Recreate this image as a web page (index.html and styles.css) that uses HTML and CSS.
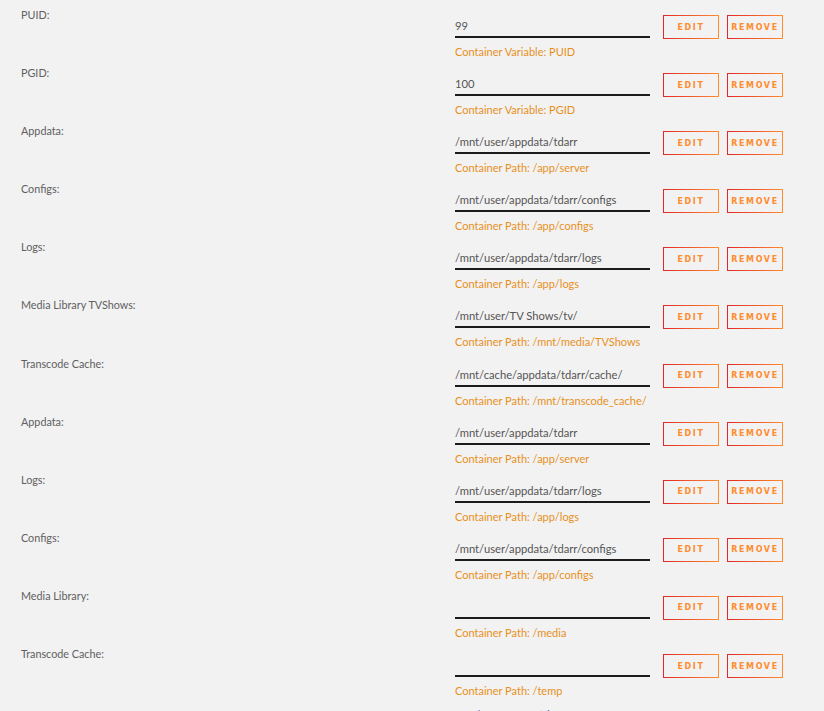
FILE: index.html
```html
<!DOCTYPE html>
<html lang="en">
<head>
    <meta charset="UTF-8">
    <meta name="viewport" content="width=device-width, initial-scale=1.0">
    <title>Container Settings</title>
    <link rel="stylesheet" href="styles.css">
</head>
<body>
    <div class="settings">
        <div class="row">
            <div class="label">PUID:</div>
            <div class="field">
                <div class="value">99</div>
                <div class="hint">Container Variable: PUID</div>
            </div>
            <div class="actions">
                <button class="btn">Edit</button>
                <button class="btn">Remove</button>
            </div>
        </div>
        <div class="row">
            <div class="label">PGID:</div>
            <div class="field">
                <div class="value">100</div>
                <div class="hint">Container Variable: PGID</div>
            </div>
            <div class="actions">
                <button class="btn">Edit</button>
                <button class="btn">Remove</button>
            </div>
        </div>
        <div class="row">
            <div class="label">Appdata:</div>
            <div class="field">
                <div class="value">/mnt/user/appdata/tdarr</div>
                <div class="hint">Container Path: /app/server</div>
            </div>
            <div class="actions">
                <button class="btn">Edit</button>
                <button class="btn">Remove</button>
            </div>
        </div>
        <div class="row">
            <div class="label">Configs:</div>
            <div class="field">
                <div class="value">/mnt/user/appdata/tdarr/configs</div>
                <div class="hint">Container Path: /app/configs</div>
            </div>
            <div class="actions">
                <button class="btn">Edit</button>
                <button class="btn">Remove</button>
            </div>
        </div>
        <div class="row">
            <div class="label">Logs:</div>
            <div class="field">
                <div class="value">/mnt/user/appdata/tdarr/logs</div>
                <div class="hint">Container Path: /app/logs</div>
            </div>
            <div class="actions">
                <button class="btn">Edit</button>
                <button class="btn">Remove</button>
            </div>
        </div>
        <div class="row">
            <div class="label">Media Library TVShows:</div>
            <div class="field">
                <div class="value">/mnt/user/TV Shows/tv/</div>
                <div class="hint">Container Path: /mnt/media/TVShows</div>
            </div>
            <div class="actions">
                <button class="btn">Edit</button>
                <button class="btn">Remove</button>
            </div>
        </div>
        <div class="row">
            <div class="label">Transcode Cache:</div>
            <div class="field">
                <div class="value">/mnt/cache/appdata/tdarr/cache/</div>
                <div class="hint">Container Path: /mnt/transcode_cache/</div>
            </div>
            <div class="actions">
                <button class="btn">Edit</button>
                <button class="btn">Remove</button>
            </div>
        </div>
        <div class="row">
            <div class="label">Appdata:</div>
            <div class="field">
                <div class="value">/mnt/user/appdata/tdarr</div>
                <div class="hint">Container Path: /app/server</div>
            </div>
            <div class="actions">
                <button class="btn">Edit</button>
                <button class="btn">Remove</button>
            </div>
        </div>
        <div class="row">
            <div class="label">Logs:</div>
            <div class="field">
                <div class="value">/mnt/user/appdata/tdarr/logs</div>
                <div class="hint">Container Path: /app/logs</div>
            </div>
            <div class="actions">
                <button class="btn">Edit</button>
                <button class="btn">Remove</button>
            </div>
        </div>
        <div class="row">
            <div class="label">Configs:</div>
            <div class="field">
                <div class="value">/mnt/user/appdata/tdarr/configs</div>
                <div class="hint">Container Path: /app/configs</div>
            </div>
            <div class="actions">
                <button class="btn">Edit</button>
                <button class="btn">Remove</button>
            </div>
        </div>
        <div class="row">
            <div class="label">Media Library:</div>
            <div class="field">
                <div class="value"></div>
                <div class="hint">Container Path: /media</div>
            </div>
            <div class="actions">
                <button class="btn">Edit</button>
                <button class="btn">Remove</button>
            </div>
        </div>
        <div class="row">
            <div class="label">Transcode Cache:</div>
            <div class="field">
                <div class="value"></div>
                <div class="hint">Container Path: /temp</div>
            </div>
            <div class="actions">
                <button class="btn">Edit</button>
                <button class="btn">Remove</button>
            </div>
        </div>
        <div class="more">
            <a href="#">Show more settings ...</a>
        </div>
    </div>
</body>
</html>
```

FILE: styles.css
```css
* {
    box-sizing: border-box;
    margin: 0;
    padding: 0;
}

body {
    background-color: #f2f2f2;
    font-family: 'Lato', 'Open Sans', sans-serif;
    font-size: 11px;
    color: #606060;
    overflow: hidden;
}

.settings {
    display: flex;
    flex-direction: column;
}

.row {
    display: flex;
    align-items: flex-start;
    height: 58.1px;
}

.label {
    width: 455px;
    padding-left: 21px;
    padding-top: 8px;
    line-height: 14px;
    font-size: 10.8px;
}

.field {
    width: 195px;
    padding-top: 16px;
}

.value {
    height: 22px;
    line-height: 20px;
    border-bottom: 2px solid #1c1c1c;
    font-size: 11.2px;
    color: #555;
    white-space: nowrap;
}

.hint {
    margin-top: 6px;
    line-height: 16px;
    color: #e8901c;
    white-space: nowrap;
}

.actions {
    display: flex;
    gap: 8px;
    margin-left: 13px;
    padding-top: 15px;
}

.btn {
    width: 56px;
    height: 24px;
    background: transparent;
    border: 1px solid;
    border-image: linear-gradient(90deg, #e22828 0, #ff8c2f 100%) 1;
    font-family: 'DejaVu Sans', sans-serif;
    font-size: 8px;
    font-weight: bold;
    letter-spacing: 1.6px;
    text-transform: uppercase;
    color: #ff8c2f;
    cursor: pointer;
}

.btn:hover {
    color: #e22828;
}

.more {
    padding-left: 472px;
    padding-top: 11px;
}

.more a {
    color: #486dba;
    text-decoration: none;
}
```
